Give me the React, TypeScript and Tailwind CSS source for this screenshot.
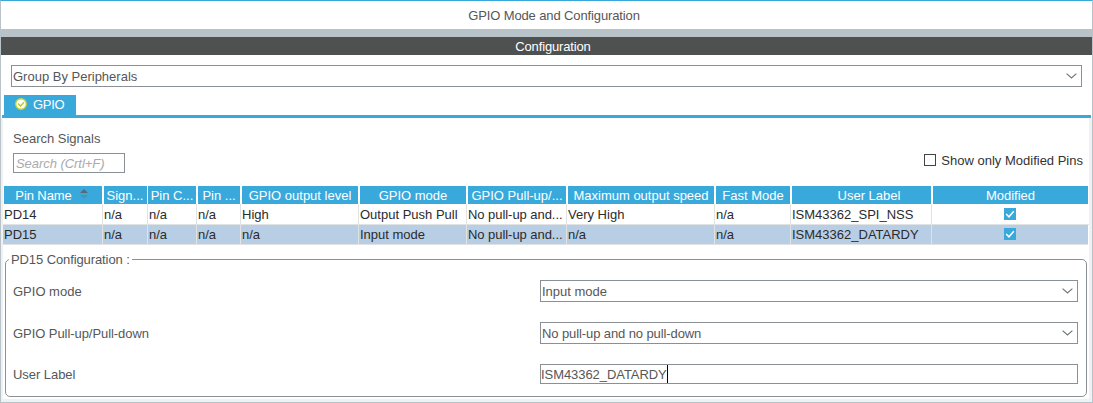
import { ReactNode } from "react";

function Chevron() {
  return (
    <svg className="mr-[4px] shrink-0" width="11" height="6" viewBox="0 0 11 6" fill="none">
      <path d="M0.6 0.6 L5.5 5 L10.4 0.6" stroke="#73777b" strokeWidth="1.2" />
    </svg>
  );
}

function Combo({ className, children }: { className: string; children: ReactNode }) {
  return (
    <div className={`flex h-[22px] items-center justify-between border border-[#8b9096] pl-px text-[#555759] ${className}`}>
      <span className="pt-[2px]">{children}</span>
      <Chevron />
    </div>
  );
}

function Checked() {
  return (
    <svg width="12" height="12" viewBox="0 0 12 12" fill="none">
      <rect width="12" height="12" fill="#39a9dc" />
      <path d="M2.2 6 L4.9 8.8 L9.8 3.2" stroke="#fff" strokeWidth="1.5" />
    </svg>
  );
}

const headers = [
  { text: "Pin Name", cls: "mr-[2px] pr-[3px] tracking-[-0.1px]" },
  { text: "Sign...", cls: "mr-px pr-px" },
  { text: "Pin C...", cls: "mr-[2px]" },
  { text: "Pin ...", cls: "mr-[2px]" },
  { text: "GPIO output level", cls: "mr-[2px]" },
  { text: "GPIO mode", cls: "mr-[2px]" },
  { text: "GPIO Pull-up/...", cls: "mr-[2px]" },
  { text: "Maximum output speed", cls: "mr-[2px]" },
  { text: "Fast Mode", cls: "mr-[2px]" },
  { text: "User Label", cls: "mr-[2px] pl-[15px]" },
  { text: "Modified", cls: "mr-px" },
];

const rows = [
  ["PD14", "n/a", "n/a", "n/a", "High", "Output Push Pull", "No pull-up and...", "Very High", "n/a", "ISM43362_SPI_NSS"],
  ["PD15", "n/a", "n/a", "n/a", "n/a", "Input mode", "No pull-up and...", "n/a", "n/a", "ISM43362_DATARDY"],
];

export default function App() {
  return (
    <div className="flex h-[403px] w-[1093px] flex-col overflow-hidden border border-t-[#39a9dc] border-[#b7c3c9] bg-white font-['Liberation_Sans',Arial,sans-serif] text-[13px] leading-[16px] text-[#555759]">
      <div className="flex h-7 shrink-0 items-center justify-center pt-[2px] pl-[15px] tracking-[-0.12px]">
        GPIO Mode and Configuration
      </div>
      <div className="h-2 shrink-0 bg-[#b7c3c9]" />
      <div className="flex h-[18px] shrink-0 items-center justify-center bg-[#4f5150] pt-px pl-[13px] tracking-[-0.15px] text-white">
        Configuration
      </div>
      <Combo className="mt-[10px] ml-[10px] w-[1071px] shrink-0">Group By Peripherals</Combo>

      <div className="mt-2 flex h-5 shrink-0 pl-[3px]">
        <div className="flex w-[72px] items-center bg-[#39a9dc] pb-[2px] pl-[11px] text-white">
          <svg width="12" height="12" viewBox="0 0 12 12" fill="none">
            <circle cx="6" cy="6" r="5.3" fill="#fff" stroke="#c4d430" strokeWidth="1.4" />
            <path d="M3 5.5 L5.5 8 L9 4.3" stroke="#b8cc22" strokeWidth="1.4" />
          </svg>
          <span className="ml-[6px] pt-[2px] tracking-[-0.3px]">GPIO</span>
        </div>
      </div>
      <div className="mr-px ml-px h-[3px] shrink-0 bg-[#39a9dc]" />

      <div className="flex min-h-0 flex-1 flex-col border-r-3 border-b-3 border-l-2 border-[#eff1f3]">
        <div className="mt-[13px] ml-[10px] h-4">Search Signals</div>
        <div className="flex h-[26px] shrink-0 justify-between pt-[6px] pr-[6px] pl-[10px]">
          <div className="flex h-5 w-[112px] shrink-0 items-center border border-[#8b9096] pt-px pl-[2px] tracking-[-0.05px] text-[#a9abad] italic">
            Search (Crtl+F)
          </div>
          <div className="flex h-[14px] items-center gap-[5px] text-[#333]">
            <span className="h-3 w-3 border border-[#444]" />
            <span className="pt-px">Show only Modified Pins</span>
          </div>
        </div>

        <div className="mt-[13px] ml-px grid h-[18px] shrink-0 grid-cols-[100px_44px_50px_44px_118px_108px_100px_148px_76px_141px_156px]">
          {headers.map((h, i) => (
            <div
              key={h.text}
              className={`flex items-center justify-center overflow-hidden bg-[#39a9dc] pt-px whitespace-nowrap text-white ${h.cls}`}
            >
              {h.text}
              {i === 0 && (
                <svg className="mb-[3px] ml-[8px]" width="8" height="10" viewBox="0 0 8 10">
                  <path d="M0 4 L4 0 L8 4 Z" fill="#5d6872" />
                  <path d="M0 6 L4 10 L8 6 Z" fill="#4a94ba" />
                </svg>
              )}
            </div>
          ))}
        </div>
        {rows.map((r, ri) => (
          <div
            key={r[0]}
            className={`shrink-0 border-b border-[#e0e2e4] pl-px text-[#2b2b2b] ${
              ri === 0 ? "h-[21px]" : "mr-px h-5 bg-[#b8cee5]"
            }`}
          >
            <div className="grid h-full grid-cols-[99px_45px_49px_44px_118px_108px_100px_148px_76px_141px_157px]">
              {r.map((c, i) => (
                <div
                  key={i}
                  className={`flex items-center border-r border-[#e0e2e4] whitespace-nowrap ${
                    i === 0 ? "" : i === 6 ? "pl-px tracking-[-0.05px]" : "pl-px"
                  } ${ri === 0 ? "pt-[2px]" : "pt-px"}`}
                >
                  {c}
                </div>
              ))}
              <div className={`flex items-center justify-center pr-[2px] ${ri === 0 ? "" : "pb-px"}`}>
                <Checked />
              </div>
            </div>
          </div>
        ))}

        <fieldset className="mt-[6px] mr-[2px] ml-[2px] h-[146px] shrink-0 rounded-[5px] border border-[#8b9096]">
          <legend className="ml-[3px] h-4 pr-[2px] pl-[2px] leading-[18px] tracking-[-0.1px]">PD15 Configuration :</legend>
          <div className="mt-[13px] flex items-center pl-[7px]">
            <span className="w-[527px] pt-[2px]">GPIO mode</span>
            <Combo className="w-[538px]">Input mode</Combo>
          </div>
          <div className="mt-5 flex items-center pl-[7px]">
            <span className="w-[527px] pt-[2px] tracking-[-0.06px]">GPIO Pull-up/Pull-down</span>
            <Combo className="w-[538px] tracking-[-0.1px]">No pull-up and no pull-down</Combo>
          </div>
          <div className="mt-5 flex items-center pl-[7px]">
            <span className="w-[527px] pt-[2px] tracking-[-0.05px]">User Label</span>
            <div className="flex h-5 w-[538px] items-center border border-[#8b9096]">
              <span className="w-[126px] pt-[2px] tracking-[-0.06px]">ISM43362_DATARDY</span>
              <span className="h-[18px] w-px bg-black" />
            </div>
          </div>
        </fieldset>
      </div>
    </div>
  );
}
